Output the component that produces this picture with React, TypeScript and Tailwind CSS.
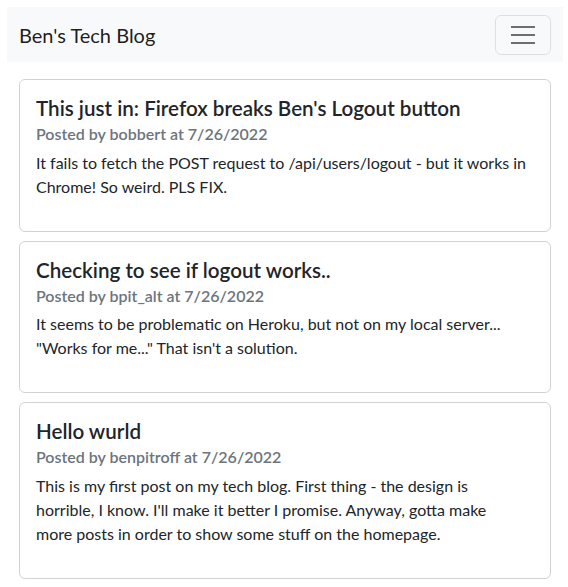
const posts = [
  {
    title: "This just in: Firefox breaks Ben's Logout button",
    author: "bobbert",
    date: "7/26/2022",
    lines: [
      "It fails to fetch the POST request to /api/users/logout - but it works in",
      "Chrome! So weird. PLS FIX.",
    ],
  },
  {
    title: "Checking to see if logout works..",
    author: "bpit_alt",
    date: "7/26/2022",
    lines: [
      "It seems to be problematic on Heroku, but not on my local server...",
      "\"Works for me...\" That isn't a solution.",
    ],
  },
  {
    title: "Hello wurld",
    author: "benpitroff",
    date: "7/26/2022",
    lines: [
      "This is my first post on my tech blog. First thing - the design is",
      "horrible, I know. I'll make it better I promise. Anyway, gotta make",
      "more posts in order to show some stuff on the homepage.",
    ],
  },
];

export default function App() {
  return (
    <div className="min-h-[587px] bg-white pl-[7px] pr-[5px] pt-[7px] text-[#212529]" style={{ fontFamily: 'Lato, "Noto Sans", sans-serif' }}>
      <nav className="flex h-[55px] items-center justify-between bg-[#f8f9fa] px-[12px]">
        <span className="text-[20px] leading-[30px] text-[rgba(0,0,0,0.9)]">Ben's Tech Blog</span>
        <button className="flex h-[40px] w-[56px] items-center justify-center rounded-[6px] border border-[rgba(0,0,0,0.1)]">
          <svg width="24" height="24" viewBox="0 0 24 24">
            <path d="M0 4h24M0 12h24M0 20h24" stroke="#6f6f6f" strokeWidth="2" />
          </svg>
        </button>
      </nav>
      <div className="flex flex-col gap-[9px] px-[12px] pt-[17px]">
        {posts.map((p) => (
          <div key={p.title} className="rounded-[6px] border border-[rgba(0,0,0,0.175)] p-[16px]">
            <h5 className="mb-[4px] text-[20.6px] font-semibold leading-[24px]">{p.title}</h5>
            <h6 className="mb-[7.5px] text-[16px] font-semibold leading-[19px] text-[#6c757d]">
              Posted by {p.author} at {p.date}
            </h6>
            <p className="mb-[16px] text-[16px] leading-[24px]">
              {p.lines.map((l) => (
                <span key={l} className="block whitespace-nowrap">{l}</span>
              ))}
            </p>
          </div>
        ))}
      </div>
    </div>
  );
}
